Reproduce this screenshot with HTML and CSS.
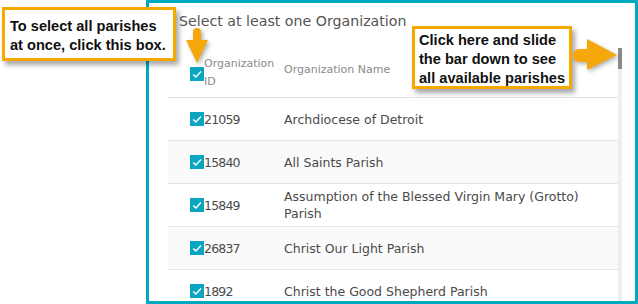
FILE: index.html
```html
<!DOCTYPE html>
<html>
<head>
<meta charset="utf-8">
<link rel="stylesheet" href="styles.css">
</head>
<body>
<div class="frame">
  <div class="title">Select at least one Organization</div>
  <div class="listwrap">
    <div class="table">
      <div class="thead">
        <div class="cell-id">
          <span class="cb"><svg viewBox="0 0 14 14" width="14" height="14"><rect width="14" height="14" fill="#0aa6c1"/><polyline points="3.2,7.4 5.9,10.1 11,4.6" fill="none" stroke="#fff" stroke-width="1.4"/></svg></span>
          <span class="th-text">Organization<br>ID</span>
        </div>
        <div class="cell-name th-text">Organization Name</div>
      </div>
      <div class="row">
        <div class="cell-id"><span class="cb"><svg viewBox="0 0 14 14" width="14" height="14"><rect width="14" height="14" fill="#0aa6c1"/><polyline points="3.2,7.4 5.9,10.1 11,4.6" fill="none" stroke="#fff" stroke-width="1.4"/></svg></span><span class="id">21059</span></div>
        <div class="cell-name">Archdiocese of Detroit</div>
      </div>
      <div class="row alt">
        <div class="cell-id"><span class="cb"><svg viewBox="0 0 14 14" width="14" height="14"><rect width="14" height="14" fill="#0aa6c1"/><polyline points="3.2,7.4 5.9,10.1 11,4.6" fill="none" stroke="#fff" stroke-width="1.4"/></svg></span><span class="id">15840</span></div>
        <div class="cell-name">All Saints Parish</div>
      </div>
      <div class="row">
        <div class="cell-id"><span class="cb"><svg viewBox="0 0 14 14" width="14" height="14"><rect width="14" height="14" fill="#0aa6c1"/><polyline points="3.2,7.4 5.9,10.1 11,4.6" fill="none" stroke="#fff" stroke-width="1.4"/></svg></span><span class="id">15849</span></div>
        <div class="cell-name">Assumption of the Blessed Virgin Mary (Grotto) Parish</div>
      </div>
      <div class="row alt">
        <div class="cell-id"><span class="cb"><svg viewBox="0 0 14 14" width="14" height="14"><rect width="14" height="14" fill="#0aa6c1"/><polyline points="3.2,7.4 5.9,10.1 11,4.6" fill="none" stroke="#fff" stroke-width="1.4"/></svg></span><span class="id">26837</span></div>
        <div class="cell-name">Christ Our Light Parish</div>
      </div>
      <div class="row">
        <div class="cell-id"><span class="cb"><svg viewBox="0 0 14 14" width="14" height="14"><rect width="14" height="14" fill="#0aa6c1"/><polyline points="3.2,7.4 5.9,10.1 11,4.6" fill="none" stroke="#fff" stroke-width="1.4"/></svg></span><span class="id">1892</span></div>
        <div class="cell-name">Christ the Good Shepherd Parish</div>
      </div>
    </div>
    <div class="scrollbar"><div class="thumb"></div></div>
  </div>
</div>

<div class="callout callout-left">To select all parishes<br>at once, click this box.</div>
<div class="callout callout-right">Click here and slide<br>the bar down to see<br>all available parishes</div>

<svg class="arrow arrow-down" viewBox="0 0 26 40" width="26" height="40">
  <rect x="9" y="2" width="8" height="16" rx="4" fill="#f5a70c"/>
  <polygon points="2,14 24,14 13,37" fill="#f5a70c"/>
</svg>
<svg class="arrow arrow-right" viewBox="0 0 50 38" width="50" height="38">
  <rect x="3" y="13" width="20" height="13" rx="6" fill="#f5a70c"/>
  <polygon points="17,3 17,34 47,19" fill="#f5a70c"/>
</svg>
</body>
</html>
```

FILE: styles.css
```css
html, body {
  margin: 0;
  padding: 0;
  background: #ffffff;
}
body {
  width: 638px;
  height: 304px;
  overflow: hidden;
  position: relative;
  font-family: "DejaVu Sans", "Noto Sans", sans-serif;
}
.frame {
  margin-left: 146px;
  width: 492px;
  height: 304px;
  box-sizing: border-box;
  border: 3px solid #00a9c2;
  display: flex;
  flex-direction: column;
  overflow: hidden;
}
.title {
  height: 45px;
  flex: none;
  box-sizing: border-box;
  padding: 8px 0 0 30px;
  font-size: 14.2px;
  line-height: 20px;
  color: #555555;
}
.listwrap {
  flex: 1;
  display: flex;
  margin-left: 19px;
  margin-right: 13px;
  min-height: 0;
  overflow: hidden;
}
.table {
  flex: 1;
  display: flex;
  flex-direction: column;
}
.scrollbar {
  width: 4px;
  flex: none;
  background: #efefef;
}
.thumb {
  height: 21px;
  background: #8a8a8a;
}
.thead {
  height: 50px;
  flex: none;
  box-sizing: border-box;
  border-bottom: 1px solid #e2e2e2;
  display: flex;
  align-items: center;
}
.row {
  height: 43px;
  flex: none;
  box-sizing: border-box;
  border-bottom: 1px solid #e4e4e4;
  display: flex;
  align-items: center;
  color: #4a4a4a;
  font-size: 12.5px;
}
.row.alt {
  background: #fafafa;
}
.cell-id {
  width: 116px;
  flex: none;
  box-sizing: border-box;
  padding-left: 22px;
  display: flex;
  align-items: center;
}
.cell-name {
  flex: 1;
  line-height: 17px;
  padding-right: 20px;
}
.cb {
  width: 14px;
  height: 14px;
  display: block;
  flex: none;
}
.cb svg {
  display: block;
}
.id {
  letter-spacing: -0.8px;
}
.th-text {
  font-size: 11px;
  color: #8a8a8a;
  line-height: 18px;
}
.thead .cell-name {
  margin-top: -6px;
}
.thead .cell-id .cb {
  margin-top: 2px;
}
.callout {
  position: absolute;
  background: #ffffff;
  border: 3px solid #f5a800;
  box-sizing: border-box;
  font-family: "Liberation Sans", Arial, sans-serif;
  font-weight: bold;
  font-size: 14.6px;
  line-height: 19px;
  color: #111;
  white-space: nowrap;
  box-shadow: 3px 4px 5px rgba(0, 0, 0, 0.35);
}
.callout-left {
  left: 2px;
  top: 7px;
  width: 174px;
  height: 54px;
  padding: 7px 0 0 5px;
}
.callout-right {
  left: 412px;
  top: 26px;
  width: 160px;
  height: 63px;
  padding: 2px 0 0 4px;
}
.arrow {
  position: absolute;
  filter: drop-shadow(2px 2px 2px rgba(0, 0, 0, 0.3));
}
.arrow-down {
  left: 184px;
  top: 26px;
}
.arrow-right {
  left: 570px;
  top: 36px;
}
```
